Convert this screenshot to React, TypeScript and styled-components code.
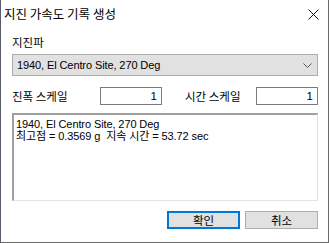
import React from "react";
import styled, { createGlobalStyle } from "styled-components";

const Global = createGlobalStyle`
  html, body { margin: 0; padding: 0; background: #ffffff; }
  body { font-family: "Liberation Sans", "Noto Sans CJK KR", sans-serif; }
`;

const Window = styled.div`
  box-sizing: border-box;
  width: 329px;
  height: 243px;
  background: #ffffff;
  border-left: 1px solid #5b5b6e;
  border-right: 1px solid #6a6a6a;
  border-bottom: 1px solid #6a6a6a;
  display: flex;
  flex-direction: column;
  color: #000;
  font-size: 11px;
`;

const TitleBar = styled.div`
  height: 29px;
  display: flex;
  align-items: center;
  justify-content: space-between;
  padding: 0 9px 0 3px;
  font-size: 12.5px;
  font-family: "Noto Sans CJK KR", sans-serif;
`;

const Title = styled.span`
  line-height: 14px;
  margin-top: -2px;
`;

const Body = styled.div`
  display: flex;
  flex-direction: column;
  padding: 6px 10px 0 11px;
`;

const Label = styled.div`
  font-family: "Noto Sans CJK KR", sans-serif;
  font-size: 11.5px;
  line-height: 14px;
  height: 14px;
`;

const Combo = styled.div`
  box-sizing: border-box;
  margin-top: 5px;
  height: 22px;
  background: #e1e1e1;
  border: 1px solid #adadad;
  display: flex;
  align-items: center;
  justify-content: space-between;
  padding: 0 5px 0 4px;
  font-size: 11px;
  letter-spacing: -0.1px;
`;

const Row = styled.div`
  margin-top: 11px;
  display: flex;
  align-items: center;
  height: 18px;
`;

const RowLabel = styled(Label)<{ $w: number; $pad?: number }>`
  box-sizing: border-box;
  width: ${(p) => p.$w}px;
  padding-left: ${(p) => p.$pad ?? 0}px;
`;

const NumBox = styled.div`
  box-sizing: border-box;
  width: 62px;
  height: 18px;
  border: 1px solid #7a7a7a;
  display: flex;
  align-items: center;
  justify-content: flex-end;
  padding-right: 4px;
  font-size: 11.5px;
`;

const Memo = styled.div`
  box-sizing: border-box;
  margin-top: 8px;
  height: 88px;
  border-top: 2px solid #a0a0a0;
  border-left: 2px solid #a0a0a0;
  border-right: 1px solid #e3e3e3;
  border-bottom: 1px solid #e3e3e3;
  padding: 3px 2px;
  font-size: 11px;
  letter-spacing: -0.1px;
  line-height: 12px;
  white-space: pre;
`;

const Buttons = styled.div`
  margin-top: 10px;
  display: flex;
  justify-content: flex-end;
  gap: 5px;
`;

const Button = styled.div<{ $primary?: boolean }>`
  box-sizing: border-box;
  width: 73px;
  height: 18px;
  background: #e1e1e1;
  border: ${(p) => (p.$primary ? "2px solid #0078d7" : "1px solid #adadad")};
  display: flex;
  align-items: center;
  justify-content: center;
  font-family: "Noto Sans CJK KR", sans-serif;
  font-size: 11.5px;
`;

const Close = () => (
  <svg width="11" height="11" viewBox="0 0 11 11">
    <path d="M0.5 0.5 L10.5 10.5 M10.5 0.5 L0.5 10.5" stroke="#111" strokeWidth="1" fill="none" />
  </svg>
);

const Chevron = () => (
  <svg width="9" height="5" viewBox="0 0 9 5">
    <path d="M0.5 0.5 L4.5 4.5 L8.5 0.5" stroke="#555" strokeWidth="1" fill="none" />
  </svg>
);

export default function App() {
  return (
    <>
      <Global />
      <Window>
        <TitleBar>
          <Title>지진 가속도 기록 생성</Title>
          <Close />
        </TitleBar>
        <Body>
          <Label>지진파</Label>
          <Combo>
            <span>1940, El Centro Site, 270 Deg</span>
            <Chevron />
          </Combo>
          <Row>
            <RowLabel $w={88}>진폭 스케일</RowLabel>
            <NumBox>1</NumBox>
            <RowLabel $w={94} $pad={23}>시간 스케일</RowLabel>
            <NumBox>1</NumBox>
          </Row>
          <Memo>{"1940, El Centro Site, 270 Deg\n최고점 = 0.3569 g  지속 시간 = 53.72 sec"}</Memo>
          <Buttons>
            <Button $primary>확인</Button>
            <Button>취소</Button>
          </Buttons>
        </Body>
      </Window>
    </>
  );
}
